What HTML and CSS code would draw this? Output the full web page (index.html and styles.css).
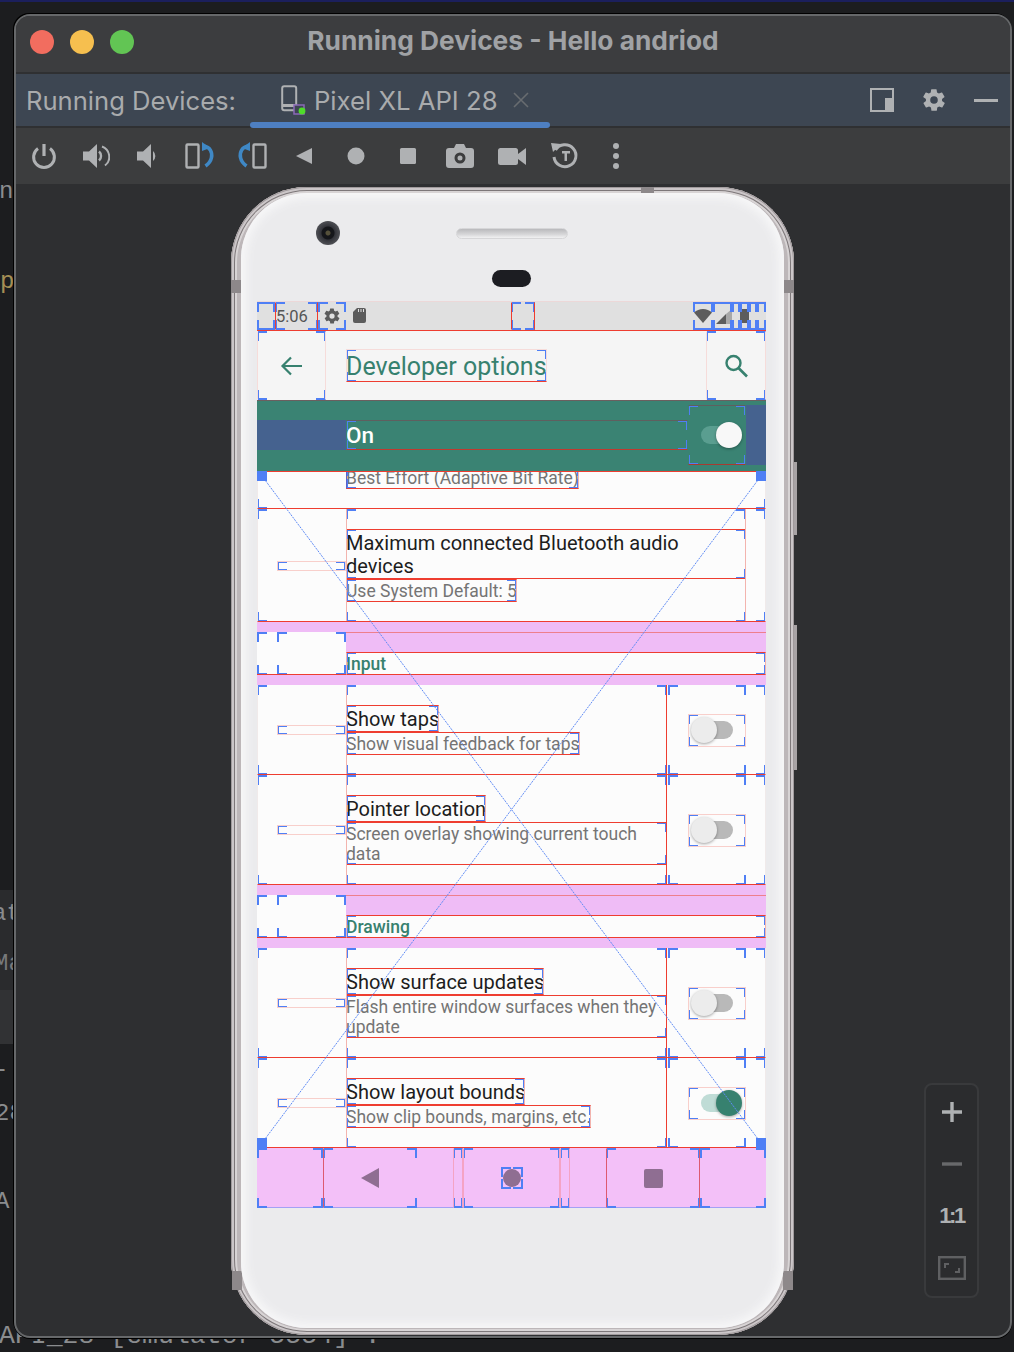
FILE: index.html
```html
<!DOCTYPE html>
<html lang="en">
<head>
  <meta charset="UTF-8">
  <meta name="viewport" content="width=device-width, initial-scale=1.0">
  <title>Running Devices - Hello andriod</title>
  <link rel="stylesheet" href="styles.css">
</head>
<body>
  <!-- bits of the IDE showing behind the tool window -->
  <div class="behind">
    <span class="behind-text bt-n">n</span>
    <span class="behind-text bt-p">p</span>
    <div class="behind-band bb-1"></div>
    <div class="behind-band bb-2"></div>
    <span class="behind-text bt-at">at</span>
    <span class="behind-text bt-ma">Ma</span>
    <span class="behind-text bt-dash">-</span>
    <span class="behind-text bt-28">28</span>
    <span class="behind-text bt-a">A:</span>
    <span class="behind-text bt-api">API_28 [emulator-5554] :</span>
  </div>

  <div class="window">
    <header class="titlebar">
      <div class="lights">
        <span class="light light-red"></span>
        <span class="light light-yellow"></span>
        <span class="light light-green"></span>
      </div>
      <h1>Running Devices - Hello andriod</h1>
    </header>

    <div class="tabbar">
      <span class="tabbar-label">Running Devices:</span>
      <div class="tab">
        <svg class="tab-icon" width="26" height="30" viewBox="0 0 26 30">
          <rect x="1.2" y="1.2" width="14" height="24" rx="2" fill="none" stroke="#afb1b3" stroke-width="2"/>
          <rect x="1" y="19" width="15" height="3" fill="#afb1b3"/>
          <rect x="13" y="20" width="10" height="9" fill="#3d4652" stroke="#8a68b8" stroke-width="1.5"/>
          <circle cx="21" cy="26" r="3.4" fill="#4fdc2a"/>
        </svg>
        <span class="tab-name">Pixel XL API 28</span>
        <svg class="tab-close" width="16" height="16" viewBox="0 0 16 16"><path d="M1 1l14 14M15 1L1 15" stroke="#686c70" stroke-width="1.6"/></svg>
      </div>
      <div class="tabbar-actions">
        <svg width="24" height="24" viewBox="0 0 24 24">
          <rect x="1" y="1" width="22" height="22" fill="none" stroke="#afb1b3" stroke-width="2"/>
          <rect x="15" y="10" width="8" height="13" fill="#afb1b3"/>
        </svg>
        <svg width="26" height="26" viewBox="0 0 24 24"><path fill="#afb1b3" d="M19.4 13a7.6 7.6 0 0 0 0-2l2.1-1.6a.5.5 0 0 0 .1-.7l-2-3.4a.5.5 0 0 0-.6-.2l-2.5 1a7.4 7.4 0 0 0-1.7-1l-.4-2.7a.5.5 0 0 0-.5-.4h-4a.5.5 0 0 0-.5.4l-.4 2.7a7.4 7.4 0 0 0-1.7 1l-2.5-1a.5.5 0 0 0-.6.2l-2 3.4a.5.5 0 0 0 .1.7L4.6 11a7.6 7.6 0 0 0 0 2l-2.1 1.6a.5.5 0 0 0-.1.7l2 3.4c.1.2.4.3.6.2l2.5-1c.5.4 1.1.7 1.7 1l.4 2.7c0 .2.2.4.5.4h4c.3 0 .5-.2.5-.4l.4-2.7c.6-.3 1.2-.6 1.7-1l2.5 1c.2.1.5 0 .6-.2l2-3.4a.5.5 0 0 0-.1-.7zM12 15.5a3.5 3.5 0 1 1 0-7 3.5 3.5 0 0 1 0 7z"/></svg>
        <span class="tabbar-minimize"></span>
      </div>
    </div>

    <div class="toolbar">
      <svg width="28" height="28" viewBox="0 0 28 28"><path d="M14 2v12" stroke="#afb1b3" stroke-width="3.2" fill="none"/><path d="M8 6.6a10.4 10.4 0 1 0 12 0" stroke="#afb1b3" stroke-width="3" fill="none"/></svg>
      <svg width="28" height="28" viewBox="0 0 28 28"><path fill="#afb1b3" d="M1 9.5h6L15 2v24l-8-7.5H1z"/><path d="M17 9.5a6 6 0 0 1 0 9" stroke="#afb1b3" stroke-width="2.4" fill="none"/><path d="M20 4.5a11 11 0 0 1 3 19" stroke="#afb1b3" stroke-width="2" fill="none"/></svg>
      <svg width="28" height="28" viewBox="0 0 28 28"><path fill="#afb1b3" d="M3 9.5h6L17 2v24l-8-7.5H3z"/><path d="M19 9a6.5 6.5 0 0 1 0 10z" fill="#afb1b3"/></svg>
      <svg width="30" height="28" viewBox="0 0 30 28"><rect x="1.5" y="2.5" width="12" height="23" rx="1" fill="none" stroke="#afb1b3" stroke-width="2.4"/><path d="M19 4c6 1 8.5 6 7.5 11.5-.6 3-2.4 6-6 8.5" fill="none" stroke="#3f88c5" stroke-width="3.6"/><path d="M17 0v9l8-3z" fill="#3f88c5"/></svg>
      <svg width="30" height="28" viewBox="0 0 30 28"><rect x="16.5" y="2.5" width="12" height="23" rx="1" fill="none" stroke="#afb1b3" stroke-width="2.4"/><path d="M11 4C5 5 2.5 10 3.5 15.5c.6 3 2.4 6 6 8.5" fill="none" stroke="#3f88c5" stroke-width="3.6"/><path d="M13 0v9L5 6z" fill="#3f88c5"/></svg>
      <svg width="28" height="28" viewBox="0 0 28 28"><path fill="#afb1b3" d="M22 6v16L6 14z"/></svg>
      <svg width="28" height="28" viewBox="0 0 28 28"><circle cx="14" cy="14" r="8.5" fill="#afb1b3"/></svg>
      <svg width="28" height="28" viewBox="0 0 28 28"><rect x="6" y="6" width="16" height="16" rx="1.5" fill="#afb1b3"/></svg>
      <svg width="30" height="28" viewBox="0 0 30 28"><path fill="#afb1b3" fill-rule="evenodd" d="M4 6h5l2-4h8l2 4h5a3 3 0 0 1 3 3v14a3 3 0 0 1-3 3H4a3 3 0 0 1-3-3V9a3 3 0 0 1 3-3zm11 4.5a5.5 5.5 0 1 0 0 11 5.5 5.5 0 0 0 0-11zm0 3a2.5 2.5 0 1 1 0 5 2.5 2.5 0 0 1 0-5z"/></svg>
      <svg width="30" height="28" viewBox="0 0 30 28"><rect x="1" y="6" width="20" height="17" rx="2.5" fill="#afb1b3"/><path fill="#afb1b3" d="M21 12l8-6v17l-8-6z"/></svg>
      <svg width="30" height="30" viewBox="0 0 30 30"><path d="M6.5 9a11 11 0 1 1-1.5 7" fill="none" stroke="#afb1b3" stroke-width="3"/><path fill="#afb1b3" d="M2 2l10 1-8 8zM13 10h8v2.500h-3V20h-2.500v-7.500H13z"/></svg>
      <svg width="28" height="28" viewBox="0 0 28 28"><circle cx="14" cy="4" r="3" fill="#afb1b3"/><circle cx="14" cy="14" r="3" fill="#afb1b3"/><circle cx="14" cy="24" r="3" fill="#afb1b3"/></svg>
    </div>

    <main class="stage">
      <div class="phone">
        <span class="phone-notch notch-top"></span>
        <span class="phone-notch notch-left"></span>
        <span class="phone-notch notch-right"></span>
        <span class="phone-notch notch-left-low"></span>
        <span class="phone-notch notch-right-low"></span>
        <span class="side-key key-power"></span>
        <span class="side-key key-volume"></span>
        <div class="face">
          <span class="camera"></span>
          <span class="speaker"></span>
          <span class="sensor"></span>

          <div class="screen">
            <div class="status-bar">
              <div class="bnd st-pad"></div>
              <div class="bnd st-time">5:06</div>
              <div class="bnd st-gear">
                <svg width="18" height="18" viewBox="0 0 24 24"><path fill="#5c5c5c" d="M19.4 13a7.6 7.6 0 0 0 0-2l2.1-1.6a.5.5 0 0 0 .1-.7l-2-3.4a.5.5 0 0 0-.6-.2l-2.5 1a7.4 7.4 0 0 0-1.7-1l-.4-2.7a.5.5 0 0 0-.5-.4h-4a.5.5 0 0 0-.5.4l-.4 2.7a7.4 7.4 0 0 0-1.7 1l-2.5-1a.5.5 0 0 0-.6.2l-2 3.4a.5.5 0 0 0 .1.7L4.6 11a7.6 7.6 0 0 0 0 2l-2.1 1.6a.5.5 0 0 0-.1.7l2 3.4c.1.2.4.3.6.2l2.5-1c.5.4 1.1.7 1.7 1l.4 2.7c0 .2.2.4.5.4h4c.3 0 .5-.2.5-.4l.4-2.7c.6-.3 1.2-.6 1.7-1l2.5 1c.2.1.5 0 .6-.2l2-3.4a.5.5 0 0 0-.1-.7zM12 15.5a3.5 3.5 0 1 1 0-7 3.5 3.5 0 0 1 0 7z"/></svg>
              </div>
              <svg class="st-sd" width="13" height="15" viewBox="0 0 13 15"><path fill="#5c5c5c" d="M4 0h7a2 2 0 0 1 2 2v11a2 2 0 0 1-2 2H2a2 2 0 0 1-2-2V4z"/><path d="M5.5 1v3M8 1v3M10.5 1v3" stroke="#e0e0e0" stroke-width="1"/></svg>
              <div class="bnd st-center"></div>
              <div class="bnd st-wifi">
                <svg width="18" height="14" viewBox="0 0 18 14"><path fill="#5c5c5c" d="M0 3.5C2.5 1.3 5.6 0 9 0s6.500 1.300 9 3.500L9 14z"/></svg>
              </div>
              <div class="bnd st-signal">
                <svg width="16" height="15" viewBox="0 0 16 15"><path fill="#5c5c5c" d="M0 15L10 5v10z"/><path fill="#a8a8a8" d="M10 5l6-5v15h-6z"/></svg>
              </div>
              <div class="bnd st-pad-small"></div>
              <div class="bnd st-battery"><span class="battery"></span></div>
              <div class="bnd st-pad-small"></div>
              <div class="bnd st-pad-end"></div>
            </div>

            <div class="app-bar">
              <div class="bnd app-bar-nav">
                <svg width="24" height="24" viewBox="0 0 24 24"><path d="M22 12H3M11 3.5L2.5 12l8.5 8.5" fill="none" stroke="#37816f" stroke-width="2.2"/></svg>
              </div>
              <div class="bnd app-bar-title">Developer options</div>
              <div class="bnd app-bar-search">
                <svg width="28" height="28" viewBox="0 0 28 28"><circle cx="11.5" cy="11" r="7" fill="none" stroke="#37816f" stroke-width="2.4"/><path d="M16.5 16l8.5 8.5" stroke="#37816f" stroke-width="2.6"/></svg>
              </div>
            </div>

            <div class="switch-bar">
              <div class="switch-bar-margin"></div>
              <div class="bnd switch-bar-label">On</div>
              <div class="bnd switch-bar-widget">
                <span class="switch switch-bar-switch"><i></i></span>
              </div>
              <div class="switch-bar-end"></div>
            </div>

            <div class="list">
              <div class="row row-clipped bnd">
                <div class="row-icon"></div>
                <div class="row-text row-text-wide">
                  <div class="bnd summary">Best Effort (Adaptive Bit Rate)</div>
                </div>
              </div>

              <div class="row bnd">
                <div class="row-icon"><span class="bnd icon-frame"></span></div>
                <div class="bnd row-text row-text-wide">
                  <div class="bnd title">Maximum connected Bluetooth audio devices</div>
                  <div class="bnd summary">Use System Default: 5</div>
                </div>
              </div>

              <div class="category">
                <div class="bnd category-icon"><span class="bnd category-icon-inner"></span></div>
                <div class="category-body"><div class="bnd category-title">Input</div></div>
              </div>

              <div class="row bnd">
                <div class="row-icon"><span class="bnd icon-frame"></span></div>
                <div class="bnd row-text">
                  <div class="bnd title">Show taps</div>
                  <div class="bnd summary">Show visual feedback for taps</div>
                </div>
                <div class="bnd row-widget"><div class="bnd switch-box"><span class="switch"><i></i></span></div></div>
              </div>

              <div class="row bnd">
                <div class="row-icon"><span class="bnd icon-frame"></span></div>
                <div class="bnd row-text">
                  <div class="bnd title">Pointer location</div>
                  <div class="bnd summary">Screen overlay showing current touch data</div>
                </div>
                <div class="bnd row-widget"><div class="bnd switch-box"><span class="switch"><i></i></span></div></div>
              </div>

              <div class="category">
                <div class="bnd category-icon"><span class="bnd category-icon-inner"></span></div>
                <div class="category-body"><div class="bnd category-title">Drawing</div></div>
              </div>

              <div class="row bnd">
                <div class="row-icon"><span class="bnd icon-frame"></span></div>
                <div class="bnd row-text">
                  <div class="bnd title">Show surface updates</div>
                  <div class="bnd summary">Flash entire window surfaces when they update</div>
                </div>
                <div class="bnd row-widget"><div class="bnd switch-box"><span class="switch"><i></i></span></div></div>
              </div>

              <div class="row bnd">
                <div class="row-icon"><span class="bnd icon-frame"></span></div>
                <div class="bnd row-text">
                  <div class="bnd title">Show layout bounds</div>
                  <div class="bnd summary">Show clip bounds, margins, etc.</div>
                </div>
                <div class="bnd row-widget"><div class="bnd switch-box"><span class="switch switch-on"><i></i></span></div></div>
              </div>

              <!-- the big X layout bounds draws over a scrolling list -->
              <svg class="list-cross" viewBox="0 0 509 677" preserveAspectRatio="none">
                <path d="M5 5L504 672M504 5L5 672" stroke="#5f8bf5" stroke-width="1" stroke-dasharray="2 1" fill="none"/>
              </svg>
              <span class="list-corner lc-tl"></span>
              <span class="list-corner lc-tr"></span>
              <span class="list-corner lc-bl"></span>
              <span class="list-corner lc-br"></span>
            </div>

            <nav class="nav-bar">
              <div class="bnd nav-side"></div>
              <div class="bnd nav-btn nav-back">
                <svg width="20" height="22" viewBox="0 0 20 22"><path fill="#8f6e92" d="M19 1v20L1 11z"/></svg>
              </div>
              <div class="nav-gap"></div>
              <div class="bnd nav-thin"></div>
              <div class="bnd nav-btn nav-home">
                <div class="bnd home-box"><span class="home-dot"></span></div>
              </div>
              <div class="bnd nav-thin"></div>
              <div class="nav-gap"></div>
              <div class="bnd nav-btn nav-recent">
                <span class="nav-square"></span>
              </div>
              <div class="bnd nav-side"></div>
            </nav>
          </div>
        </div>
      </div>

      <div class="zoom-panel">
        <svg width="20" height="20" viewBox="0 0 20 20"><path d="M10 0v20M0 10h20" stroke="#afb1b3" stroke-width="3.4"/></svg>
        <svg width="20" height="20" viewBox="0 0 20 20"><path d="M0 10h20" stroke="#68696b" stroke-width="3.4"/></svg>
        <span class="zoom-one">1:1</span>
        <svg width="28" height="24" viewBox="0 0 28 24">
          <rect x="1.2" y="1.2" width="25.6" height="21.6" fill="none" stroke="#5f6062" stroke-width="2.4"/>
          <path d="M11 8H7v4M17 16h4v-4" fill="none" stroke="#5f6062" stroke-width="2"/>
        </svg>
      </div>
    </main>
  </div>
</body>
</html>
```

FILE: styles.css
```css
* {
  box-sizing: border-box;
}
html, body {
  margin: 0;
  height: 100%;
}
body {
  position: relative;
  width: 1014px;
  height: 1352px;
  overflow: hidden;
  background-color: #1c1d1f;
  border-top: 2px solid #1b1f5c;
  font-family: Inter, "Liberation Sans", sans-serif;
}

/* IDE behind the window */
.behind {
  position: absolute;
  inset: 0;
  overflow: hidden;
}
.behind-text {
  position: absolute;
  left: 0;
  font-family: "Liberation Mono", monospace;
  font-size: 24px;
  line-height: 28px;
  color: #8a8c8e;
  white-space: nowrap;
}
.behind-band {
  position: absolute;
  left: 0;
  width: 14px;
}
.bb-1 {
  top: 888px;
  height: 100px;
  background-color: #2a2b2d;
}
.bb-2 {
  top: 988px;
  height: 54px;
  background-color: #313234;
}
.bt-n { top: 176px; left: -1px; }
.bt-p { top: 266px; left: 0; color: #a58f55; }
.bt-at { top: 898px; left: -8px; }
.bt-ma { top: 948px; left: -6px; color: #77797b; }
.bt-dash { top: 1054px; left: -6px; }
.bt-28 { top: 1098px; left: -5px; }
.bt-a { top: 1186px; left: -5px; }
.bt-api { top: 1320px; left: -1px; font-size: 26.5px; }

/* tool window */
.window {
  position: absolute;
  left: 14px;
  top: 12px;
  width: 998px;
  height: 1324px;
  display: flex;
  flex-direction: column;
  overflow: hidden;
  background-color: #2e2f31;
  border: 2px solid #66686a;
  border-radius: 16px;
  box-shadow: -1px -1px 0 #000, 0 1px 0 #000;
}
.titlebar {
  position: relative;
  flex: 0 0 58px;
  display: flex;
  align-items: center;
  justify-content: center;
  padding-bottom: 8px;
  background-color: #3c3d3f;
  border-bottom: 2px solid #2f3032;
}
.titlebar h1 {
  margin: 0;
  font-size: 26.3px;
  font-weight: 700;
  color: #a0a2a5;
}
.lights {
  position: absolute;
  left: 14px;
  top: 14px;
  display: flex;
  gap: 16px;
}
.light {
  width: 24px;
  height: 24px;
  border-radius: 50%;
}
.light-red { background-color: #f26d5f; }
.light-yellow { background-color: #f6bf4f; }
.light-green { background-color: #62c554; }

.tabbar {
  flex: 0 0 54px;
  display: flex;
  align-items: center;
  padding: 0 12px 0 10px;
  background-color: #3d4652;
  border-bottom: 2px solid #2f3032;
}
.tabbar-label {
  font-size: 25.6px;
  color: #a9abad;
}
.tab {
  position: relative;
  align-self: stretch;
  width: 300px;
  margin-left: 14px;
  display: flex;
  align-items: center;
  padding-left: 31px;
}
.tab::after {
  content: "";
  position: absolute;
  left: 0;
  right: 0;
  bottom: -2px;
  height: 6px;
  border-radius: 3px;
  background-color: #4e7fc1;
}
.tab-icon {
  margin-right: 7px;
}
.tab-name {
  font-size: 25.7px;
  color: #a9abad;
}
.tab-close {
  margin-left: 15px;
}
.tabbar-actions {
  margin-left: auto;
  display: flex;
  align-items: center;
  gap: 27px;
}
.tabbar-minimize {
  width: 24px;
  height: 3px;
  background-color: #afb1b3;
}

.toolbar {
  flex: 0 0 56px;
  display: grid;
  grid-auto-flow: column;
  grid-auto-columns: 52px;
  justify-content: start;
  justify-items: center;
  align-items: center;
  padding-left: 2px;
  background-color: #3c3d3e;
}

.stage {
  position: relative;
  flex: 1;
  display: flex;
  justify-content: center;
  align-items: flex-start;
  padding: 3px 1px 0 0;
}

/* zoom controls float over the stage */
.zoom-panel {
  position: absolute;
  right: 31px;
  top: 899px;
  width: 55px;
  height: 215px;
  display: grid;
  grid-auto-rows: 52px;
  justify-items: center;
  align-items: center;
  padding-top: 1px;
  background-color: #2b2c2e;
  border: 2px solid #393a3c;
  border-radius: 8px;
}
.zoom-one {
  font-family: "Liberation Sans", sans-serif;
  font-size: 22px;
  font-weight: 700;
  letter-spacing: -2.5px;
  color: #afb1b3;
}

/* device frame */
.phone {
  position: relative;
  width: 563px;
  height: 1148px;
  padding: 6px 10px 7px 10px;
  background-color: #bdb7b9;
  border-radius: 76px;
  box-shadow: inset 0 0 0 1px #a09a9c, inset 0 0 0 3px #cbc6c8, inset 0 0 0 4px #7d7779, inset 0 0 0 6px #d8d4d5;
}
.phone-notch {
  position: absolute;
  background-color: #8d888a;
}
.notch-top { left: 410px; top: 0; width: 13px; height: 6px; }
.notch-left { left: 0; top: 93px; width: 10px; height: 13px; }
.notch-right { right: 0; top: 93px; width: 10px; height: 13px; }
.notch-left-low { left: 1px; top: 1084px; width: 10px; height: 19px; }
.notch-right-low { right: 1px; top: 1084px; width: 10px; height: 19px; }
.side-key {
  position: absolute;
  right: -3px;
  width: 3px;
  background-color: #a8a3a5;
}
.key-power { top: 275px; height: 73px; }
.key-volume { top: 438px; height: 145px; }
.face {
  position: relative;
  height: 100%;
  padding: 108px 18px 0 16px;
  background-color: #ebebed;
  border-radius: 66px;
  box-shadow: inset 0 0 10px 5px #f7f7f8;
}
.camera {
  position: absolute;
  left: 75px;
  top: 28px;
  width: 24px;
  height: 24px;
  border-radius: 50%;
  background: radial-gradient(circle, #55503a 0 2px, #15161a 3px 6px, #33343a 7px, #6b6c70 100%);
}
.speaker {
  position: absolute;
  left: 215px;
  top: 35px;
  width: 112px;
  height: 11px;
  border: 1px solid #d6d6d8;
  border-radius: 6px;
  background: linear-gradient(#b9b9bc, #d7d7d9 60%, #f1f1f2);
}
.sensor {
  position: absolute;
  left: 251px;
  top: 77px;
  width: 39px;
  height: 17px;
  border-radius: 9px;
  background-color: #1c1d22;
}

/* layout bounds: red box with blue corner ticks, as Android draws them */
.bnd {
  --tick: #4f7ff5;
  position: relative;
}
.bnd::after {
  content: "";
  position: absolute;
  inset: 0;
  border: 1px solid;
  border-color: #ee3d30 #f3b4ae;
  background-image:
    linear-gradient(var(--tick), var(--tick)), linear-gradient(var(--tick), var(--tick)),
    linear-gradient(var(--tick), var(--tick)), linear-gradient(var(--tick), var(--tick)),
    linear-gradient(var(--tick), var(--tick)), linear-gradient(var(--tick), var(--tick)),
    linear-gradient(var(--tick), var(--tick)), linear-gradient(var(--tick), var(--tick));
  background-repeat: no-repeat;
  background-origin: border-box;
  background-clip: border-box;
  background-size:
    10px 2px, 2px 10px, 10px 2px, 2px 10px,
    10px 2px, 2px 10px, 10px 2px, 2px 10px;
  background-position:
    0 0, 0 0, 100% 0, 100% 0,
    0 100%, 0 100%, 100% 100%, 100% 100%;
  pointer-events: none;
}

/* emulator screen */
.screen {
  width: 509px;
  font-family: Roboto, sans-serif;
}
.status-bar {
  height: 30px;
  display: flex;
  background-color: #e0e0e0;
  border-top: 1px solid #ecd8d8;
  border-bottom: 1px solid #ee3d30;
  color: #555;
}
.status-bar > * {
  flex: none;
}
.status-bar .bnd::after {
  border-color: transparent;
}
.status-bar .st-time::after,
.status-bar .st-center::after {
  border-color: transparent #ee3d30;
}
.st-pad { width: 18px; }
.st-time {
  width: 43px;
  padding-left: 1px;
  font-size: 16.5px;
  line-height: 30px;
}
.st-gear {
  width: 28px;
  display: flex;
  align-items: center;
  justify-content: center;
}
.st-sd { margin: 6px 0 0 7px; }
.st-center {
  width: 24px;
  margin-left: 145px;
}
.st-wifi {
  width: 20px;
  margin-left: 158px;
  display: flex;
  align-items: center;
  justify-content: center;
}
.st-signal {
  width: 19px;
  display: flex;
  align-items: center;
  justify-content: flex-end;
}
.st-pad-small { width: 8px; }
.st-battery {
  width: 9px;
  display: flex;
  align-items: center;
  justify-content: center;
}
.battery {
  width: 9px;
  height: 14px;
  border-radius: 2px;
  background-color: #5c5c5c;
}
.st-pad-end { width: 9px; }

.app-bar {
  height: 70px;
  display: flex;
  align-items: center;
  background-color: #f5f5f5;
  border-bottom: 1px solid #6b5f5f;
}
.app-bar .bnd::after {
  border-color: transparent #f6dcda;
}
.app-bar-nav {
  align-self: stretch;
  width: 69px;
  display: flex;
  align-items: center;
  justify-content: center;
}
.app-bar .app-bar-title::after {
  border-color: #f6dcda #f6dcda #ee3d30;
}
.app-bar-title {
  height: 33px;
  margin-left: 20px;
  font-size: 25px;
  line-height: 36px;
  color: #37816f;
}
.app-bar-search {
  align-self: stretch;
  width: 60px;
  margin-left: auto;
  display: flex;
  align-items: center;
  justify-content: center;
}

.switch-bar {
  height: 70px;
  display: flex;
  align-items: center;
  padding-bottom: 3px;
  background-color: #3a8373;
}
.switch-bar-margin {
  width: 89px;
  height: 30px;
  background-color: #45628f;
}
.switch-bar-label {
  width: 342px;
  height: 30px;
  font-size: 22.5px;
  font-weight: 500;
  line-height: 31px;
  color: #fff;
}
.switch-bar-label::after {
  border-color: #5f5f5f #3a8373 #c0392f;
}
.switch-bar-widget {
  width: 58px;
  height: 60px;
  display: flex;
  align-items: center;
}
.switch-bar-widget::after {
  border-color: #5f5f5f #3a8373 #a83a30;
}
.switch-bar-end {
  width: 20px;
  height: 60px;
  background-color: #45628f;
}

/* settings list */
.list {
  position: relative;
  background-color: #fcfcfc;
}
.row {
  display: flex;
}
.row::after {
  border-top-width: 0;
  border-color: #ee3d30 #f0eaea;
}
.row-clipped {
  height: 38px;
  overflow: hidden;
}
.row-clipped::after {
  border-top-width: 1px;
}
.row-clipped .row-text {
  justify-content: flex-start;
  padding: 0;
}
.row-clipped .summary {
  margin-top: -5px;
}
.row-icon {
  flex: 0 0 89px;
  display: flex;
  align-items: center;
  padding-left: 20px;
}
.icon-frame {
  width: 69px;
  height: 10px;
}
.icon-frame::after {
  border-color: #f8cfcb;
}
.row-text {
  flex: 0 0 321px;
  display: flex;
  flex-direction: column;
  align-items: flex-start;
  justify-content: center;
  padding: 20px 0;
}
.row-text::after {
  border-top-width: 0;
  border-right-color: #ee3d30;
}
.row-text-wide {
  flex-basis: 400px;
}
.row-text-wide::after {
  border-right-color: #f3b4ae;
}
.title {
  padding: 3px 0 1px;
  font-size: 20px;
  line-height: 23px;
  color: #1d1d1d;
}
.summary {
  padding: 2px 0 1px;
  font-size: 17.5px;
  line-height: 20px;
  color: #747474;
}
.title::after,
.summary::after {
  border-left-color: #5b62c8;
}
.row-widget {
  flex: 0 0 78px;
  margin-left: 1px;
  display: flex;
  align-items: center;
  justify-content: flex-end;
}
.row-widget::after {
  border-width: 0;
}
.switch-box {
  width: 58px;
  height: 33px;
  display: flex;
  align-items: center;
}
.switch-box::after {
  border-color: #f8cfcb;
}

.switch {
  position: relative;
  display: block;
  width: 36px;
  height: 18px;
  margin-left: 9px;
  border-radius: 9px;
  background-color: #b9b9b9;
}
.switch i {
  position: absolute;
  left: -6px;
  top: -4px;
  width: 26px;
  height: 26px;
  border-radius: 50%;
  background-color: #ececec;
  box-shadow: 0 1px 3px rgba(0, 0, 0, 0.35);
}
.switch-on {
  margin-left: 13px;
  background-color: #bfdcd6;
}
.switch-on i {
  left: auto;
  right: -5px;
  background-color: #37816f;
}
.switch-bar-switch {
  margin-left: 13px;
  background-color: #5a9e90;
}
.switch-bar-switch i {
  left: auto;
  right: -5px;
  background-color: #f8f8f8;
}

.category {
  display: grid;
  grid-template-columns: 89px 1fr;
  padding: 10px 0;
  background-color: #efbcf6;
}
.category-icon {
  background-color: #fcfcfc;
  padding-left: 20px;
}
.category-icon::after {
  border-width: 0 0 1px;
  border-color: #ee3d30;
}
.category-icon-inner {
  display: block;
  height: 100%;
}
.category-icon-inner::after {
  border-width: 0;
}
.category-body {
  padding-top: 19px;
  border-top: 1px solid #ee7f8c;
}
.category-title {
  height: 23px;
  font-size: 17.5px;
  font-weight: 500;
  line-height: 24px;
  color: #37816f;
  background-color: #fcfcfc;
}

.list-cross {
  position: absolute;
  inset: 0;
  width: 100%;
  height: 100%;
  pointer-events: none;
}
.list-corner {
  position: absolute;
  width: 10px;
  height: 10px;
  background-color: #4f7ff5;
}
.lc-tl { left: 0; top: 0; }
.lc-tr { right: 0; top: 0; }
.lc-bl { left: 0; bottom: 0; }
.lc-br { right: 0; bottom: 0; }

.nav-bar {
  height: 60px;
  display: flex;
  background-color: #f3c0f8;
  box-shadow: inset 0 -1px 0 #a3a0f5;
}
.nav-bar .bnd::after {
  border-color: transparent #f4a3c4;
}
.nav-bar .nav-side::after,
.nav-bar .home-box::after {
  border-color: transparent;
}
.nav-bar .nav-back::after {
  border-color: transparent transparent transparent #dd5a70;
}
.nav-bar .nav-recent::after {
  border-color: transparent #dd5a70;
}
.nav-side { flex: 0 0 66px; }
.nav-btn {
  flex: 0 0 94px;
  display: flex;
  align-items: center;
  justify-content: center;
}
.nav-gap { flex: 0 0 36px; }
.nav-thin { flex: 0 0 10px; }
.nav-home { flex-basis: 97px; }
.home-box {
  width: 22px;
  height: 22px;
  display: flex;
  align-items: center;
  justify-content: center;
}
.home-dot {
  width: 18px;
  height: 18px;
  border-radius: 50%;
  background-color: #8f6e92;
}
.nav-square {
  width: 19px;
  height: 19px;
  border-radius: 2px;
  background-color: #8f6e92;
}
```
